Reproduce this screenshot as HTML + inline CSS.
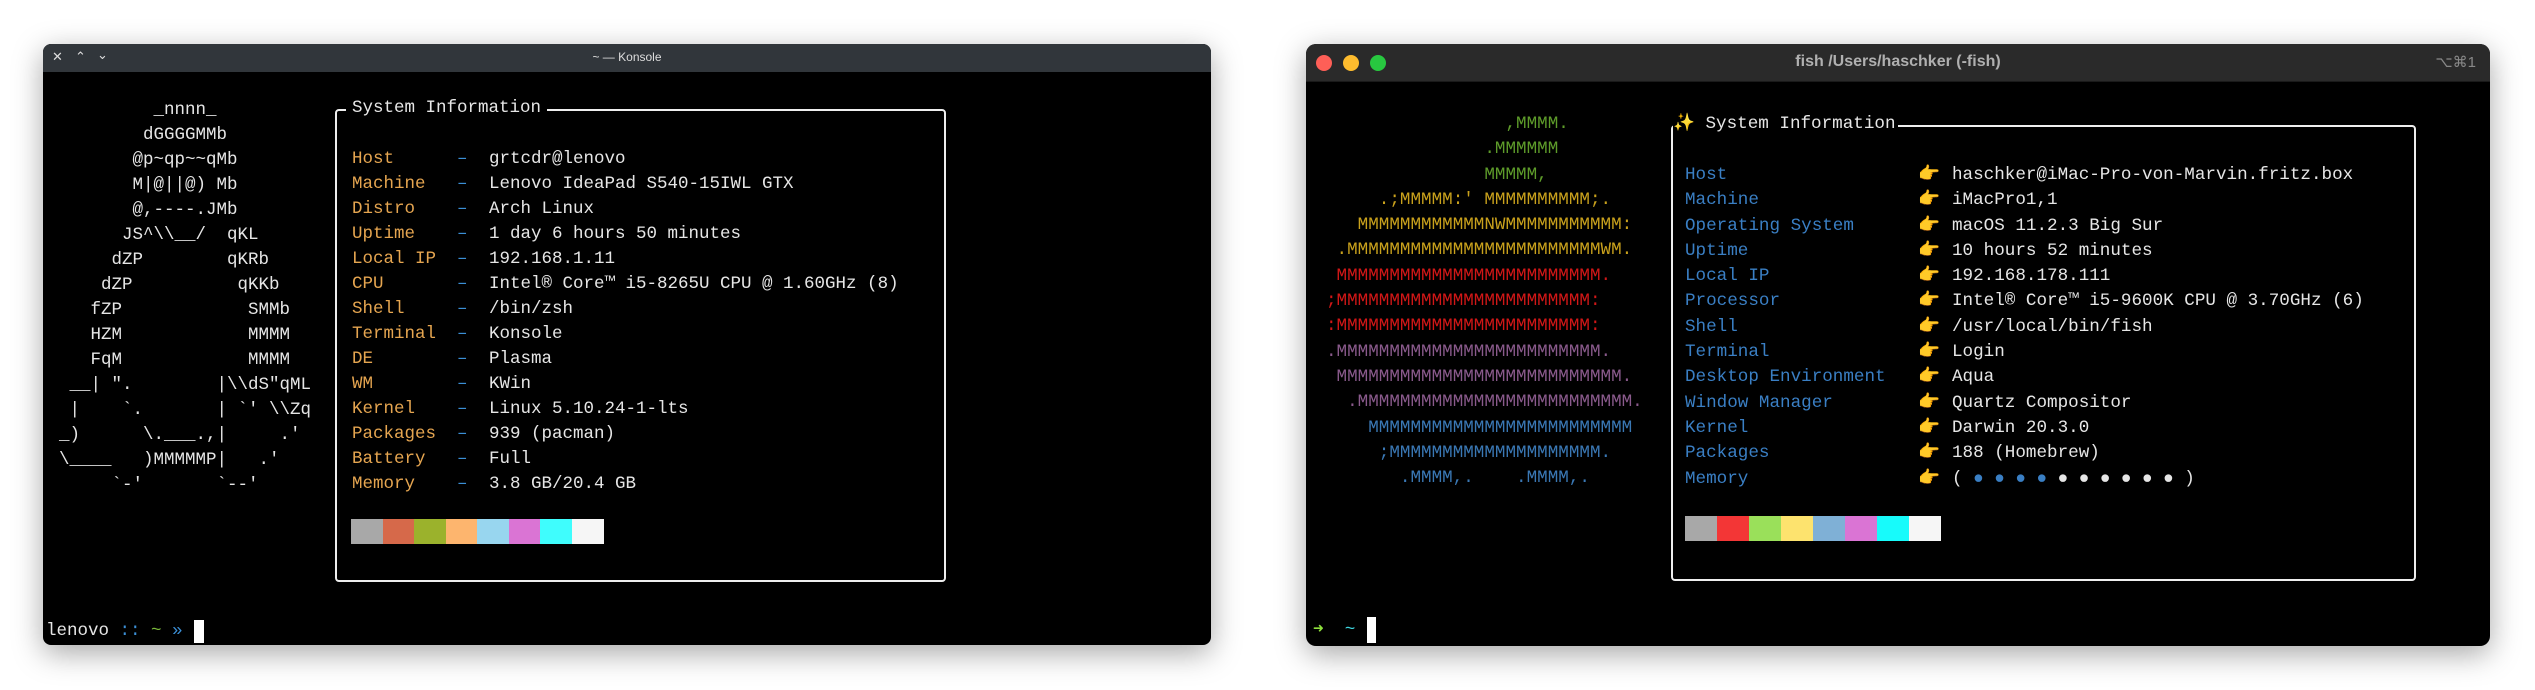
<!DOCTYPE html>
<html><head><meta charset="utf-8"><style>
*{margin:0;padding:0;box-sizing:border-box}
body{width:2535px;height:690px;background:#fff;position:relative;overflow:hidden;font-family:"Liberation Mono",monospace}
.win{position:absolute;background:#000;overflow:hidden;box-shadow:0 8px 30px rgba(0,0,0,.35)}
.t{position:absolute;white-space:pre;line-height:25px;font-size:17.5px;color:#e6e6e6}
.f{position:absolute;white-space:pre;line-height:25.3px;font-size:17.6px;color:#e6e6e6}
.box{position:absolute;border:2px solid #eee;border-radius:4px}
.cb{position:absolute;display:flex}
.cb div{height:100%}
</style></head><body>

<!-- Konsole -->
<div class="win" style="left:43px;top:44px;width:1168px;height:601px;border-radius:8px">
  <div style="position:absolute;left:0;top:0;width:100%;height:28px;background:#31363b"></div>
  <div style="position:absolute;left:9px;top:5px;color:#ddd;font:13px 'Liberation Sans',sans-serif">✕</div>
  <div style="position:absolute;left:32px;top:5px;color:#ddd;font:13px 'Liberation Sans',sans-serif">⌃</div>
  <div style="position:absolute;left:54px;top:3px;color:#ddd;font:13px 'Liberation Sans',sans-serif">⌄</div>
  <div style="position:absolute;left:0;width:1168px;top:6px;text-align:center;color:#ddd;font:12px 'Liberation Sans',sans-serif">~ — Konsole</div>
</div>
<div class="t" style="left:59px;top:98px">         _nnnn_
        dGGGGMMb
       @p~qp~~qMb
       M|@||@) Mb
       @,----.JMb
      JS^\\__/  qKL
     dZP        qKRb
    dZP          qKKb
   fZP            SMMb
   HZM            MMMM
   FqM            MMMM
 __| ".        |\\dS"qML
 |    `.       | `' \\Zq
_)      \.___.,|     .'
\____   )MMMMMP|   .'
     `-'       `--'</div>
<div class="box" style="left:335px;top:109px;width:611px;height:473px"></div>
<div class="t" style="left:346px;top:96px;background:#000;padding:0 6px">System Information</div>
<div class="t" style="left:352px;top:147px;color:#e5a550">Host
Machine
Distro
Uptime
Local IP
CPU
Shell
Terminal
DE
WM
Kernel
Packages
Battery
Memory</div>
<div class="t" style="left:457px;top:147px;color:#3b8fd6">–
–
–
–
–
–
–
–
–
–
–
–
–
–</div>
<div class="t" style="left:489px;top:147px">grtcdr@lenovo
Lenovo IdeaPad S540-15IWL GTX
Arch Linux
1 day 6 hours 50 minutes
192.168.1.11
Intel® Core™ i5-8265U CPU @ 1.60GHz (8)
/bin/zsh
Konsole
Plasma
KWin
Linux 5.10.24-1-lts
939 (pacman)
Full
3.8 GB/20.4 GB</div>
<div class="cb" style="left:351px;top:519px;width:253px;height:25px">
<div style="width:32px;background:#a8a8a8"></div><div style="width:31px;background:#d6694a"></div><div style="width:32px;background:#9bb22c"></div><div style="width:31px;background:#fdb56e"></div><div style="width:32px;background:#98d6ef"></div><div style="width:31px;background:#da74d4"></div><div style="width:32px;background:#3ffdfd"></div><div style="width:32px;background:#f6f6f6"></div></div>
<div class="t" style="left:46px;top:619px">lenovo <span style="color:#3b8fd6">::</span> <span style="color:#7ab83a">~</span> <span style="color:#3b8fd6">»</span></div>
<div style="position:absolute;left:194px;top:620px;width:10px;height:23px;background:#fff"></div>

<!-- fish -->
<div class="win" style="left:1306px;top:44px;width:1184px;height:602px;border-radius:10px">
  <div style="position:absolute;left:0;top:0;width:100%;height:38px;background:#2a2a2a;border-bottom:1px solid #1a1a1a"></div>
  <div style="position:absolute;left:10px;top:11px;width:16px;height:16px;border-radius:50%;background:#fe5f57"></div>
  <div style="position:absolute;left:37px;top:11px;width:16px;height:16px;border-radius:50%;background:#febc2e"></div>
  <div style="position:absolute;left:64px;top:11px;width:16px;height:16px;border-radius:50%;background:#28c840"></div>
  <div style="position:absolute;left:0;width:1184px;top:9px;text-align:center;color:#b0b0b0;font:bold 16px 'Liberation Sans',sans-serif">fish /Users/haschker (-fish)</div>
  <div style="position:absolute;right:14px;top:9px;color:#888;font:15px 'Liberation Sans',sans-serif">⌥⌘1</div>
</div>
<div class="f" style="left:1326px;top:112px"><span style="color:#5e9c2a">                 ,MMMM.
               .MMMMMM
               MMMMM,
</span><span style="color:#c9a11c">     .;MMMMM:' MMMMMMMMMM;.
   MMMMMMMMMMMMNWMMMMMMMMMMM:
 .MMMMMMMMMMMMMMMMMMMMMMMMWM.
</span><span style="color:#d21717"> MMMMMMMMMMMMMMMMMMMMMMMMM.
;MMMMMMMMMMMMMMMMMMMMMMMM:
:MMMMMMMMMMMMMMMMMMMMMMMM:
</span><span style="color:#8a5a8c">.MMMMMMMMMMMMMMMMMMMMMMMMM.
 MMMMMMMMMMMMMMMMMMMMMMMMMMM.
  .MMMMMMMMMMMMMMMMMMMMMMMMMM.
</span><span style="color:#3a78b5">    MMMMMMMMMMMMMMMMMMMMMMMMM
     ;MMMMMMMMMMMMMMMMMMMM.
       .MMMM,.    .MMMM,.</span></div>
<div class="box" style="left:1671px;top:125px;width:745px;height:456px;border-width:2px"></div>
<div class="f" style="left:1673px;top:112px;background:#000;padding-right:2px"><span style="color:#f5c542">✨</span> System Information</div>
<div class="f" style="left:1685px;top:163px;color:#3a7fc4">Host
Machine
Operating System
Uptime
Local IP
Processor
Shell
Terminal
Desktop Environment
Window Manager
Kernel
Packages
Memory</div>
<div class="f" style="left:1918px;top:163px;color:#f4a62a">👉
👉
👉
👉
👉
👉
👉
👉
👉
👉
👉
👉
👉</div>
<div class="f" style="left:1952px;top:163px">haschker@iMac-Pro-von-Marvin.fritz.box
iMacPro1,1
macOS 11.2.3 Big Sur
10 hours 52 minutes
192.168.178.111
Intel® Core™ i5-9600K CPU @ 3.70GHz (6)
/usr/local/bin/fish
Login
Aqua
Quartz Compositor
Darwin 20.3.0
188 (Homebrew)
( <span style="color:#3a7fc4">● ● ● ●</span> ● ● ● ● ● ● )</div>
<div class="cb" style="left:1685px;top:516px;width:256px;height:25px">
<div style="width:32px;background:#a8a8a8"></div><div style="width:32px;background:#f33636"></div><div style="width:32px;background:#9ae05a"></div><div style="width:32px;background:#fde36e"></div><div style="width:32px;background:#7fb0d6"></div><div style="width:32px;background:#da74d4"></div><div style="width:32px;background:#17fbfb"></div><div style="width:32px;background:#f6f6f6"></div></div>
<div class="f" style="left:1313px;top:618px"><span style="color:#8ee03c">➜</span>  <span style="color:#3fd6e0">~</span></div>
<div style="position:absolute;left:1367px;top:617px;width:9px;height:26px;background:#fff"></div>
</body></html>
